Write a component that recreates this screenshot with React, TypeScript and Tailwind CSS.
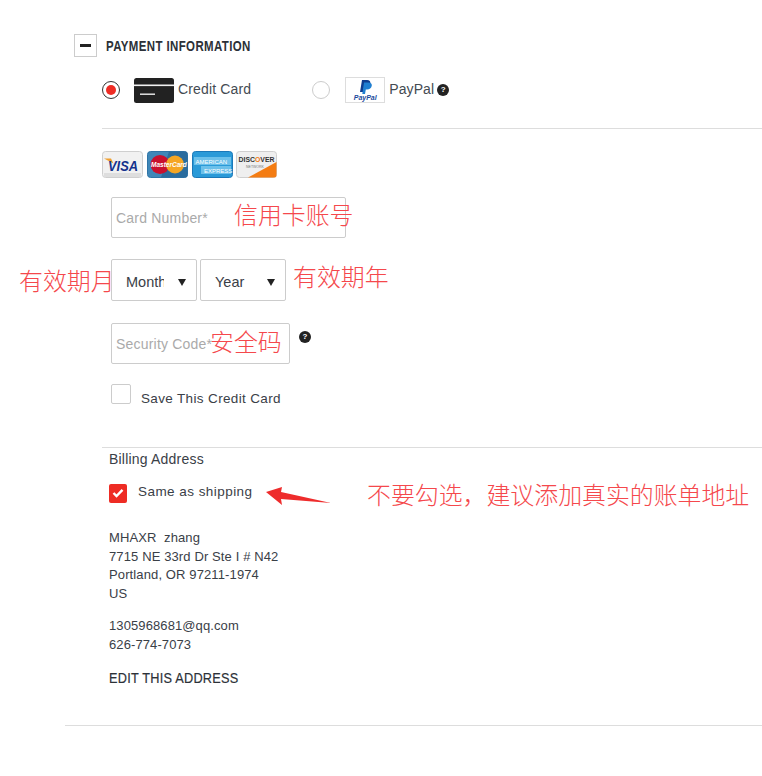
const note =
  "absolute font-['Noto_Sans_CJK_SC',sans-serif] font-light text-[23.900px] leading-[30px] text-[#f5484c] whitespace-nowrap";

function HelpDot({ className = "" }: { className?: string }) {
  return (
    <span
      className={`flex h-3 w-3 items-center justify-center rounded-full bg-[#222] text-[8px] font-bold leading-none text-white ${className}`}
    >
      ?
    </span>
  );
}

function CardIcon() {
  return (
    <svg width="40" height="25" viewBox="0 0 40 25">
      <rect x="0" y="0" width="40" height="25" rx="2.5" fill="#222" />
      <rect x="0" y="6.5" width="40" height="1.6" fill="#f2f2f2" />
      <rect x="6" y="15.500" width="15" height="1.4" fill="#eee" />
    </svg>
  );
}

function PayPalIcon() {
  return (
    <div className="flex h-[26px] w-10 flex-col items-center border border-[#ddd] bg-white">
      <svg width="13" height="14" viewBox="0 0 13 14" className="mt-[2px]">
        <path d="M3 0h5c2.600 0 3.800 1.500 3.300 3.800C10.800 6.200 9 7.500 6.700 7.500H5L4.200 12H1z" fill="#0f3d8f" />
        <path d="M5 2.500h4.500c2.400 0 3.700 1.300 3.200 3.500-.5 2.300-2.200 3.500-4.500 3.500H6.800L6 14H3.300z" fill="#1f7fd1" />
      </svg>
      <span className="text-[7px] font-bold italic leading-[8px] text-[#1b4a9c]">PayPal</span>
    </div>
  );
}

function Visa() {
  return (
    <svg width="41" height="27" viewBox="0 0 41 27">
      <rect x=".5" y=".5" width="40" height="26" rx="3" fill="#f1f1f1" stroke="#cfcfcf" />
      <path d="M2 26h37v-4H2z" fill="#dedede" />
      <path d="M2 7.500h7l2.500 5z" fill="#f0a030" />
      <text x="6" y="19.500" textLength="30" lengthAdjust="spacingAndGlyphs" fontSize="15" fontWeight="700" fontStyle="italic" fill="#14328c" fontFamily="Liberation Sans">
        VISA
      </text>
    </svg>
  );
}

function MasterCard() {
  return (
    <svg width="41" height="27" viewBox="0 0 41 27">
      <rect x=".5" y=".5" width="40" height="26" rx="3" fill="#3f87b8" stroke="#2f74a6" />
      <path d="M22 .5h16a2.500 2.500 0 0 1 2.500 2.500v21a2.500 2.500 0 0 1-2.500 2.500H14z" fill="#2a6c9e" />
      <circle cx="13" cy="13.500" r="9.500" fill="#c8102e" />
      <circle cx="28" cy="13.500" r="9" fill="#f5a623" />
      <text x="4" y="16" fontSize="6.500" fontWeight="700" fontStyle="italic" fill="#fff" fontFamily="Liberation Sans">
        MasterCard
      </text>
    </svg>
  );
}

function Amex() {
  return (
    <svg width="41" height="27" viewBox="0 0 41 27">
      <rect x=".5" y=".5" width="40" height="26" rx="3" fill="#2a9ad8" stroke="#1b78b8" />
      <rect x="2" y="6" width="37" height="8" fill="#6cc0ea" />
      <rect x="9" y="15" width="30" height="8" fill="#6cc0ea" />
      <text x="3.500" y="12.500" fontSize="6" fill="#fff" fontFamily="Liberation Sans">
        AMERICAN
      </text>
      <text x="12" y="21.500" fontSize="6" fill="#fff" fontFamily="Liberation Sans">
        EXPRESS
      </text>
    </svg>
  );
}

function Discover() {
  return (
    <svg width="41" height="27" viewBox="0 0 41 27">
      <rect x=".5" y=".5" width="40" height="26" rx="3" fill="#efefef" stroke="#cfcfcf" />
      <path d="M12 26.500 40.500 11v13a2.500 2.500 0 0 1-2.500 2.500z" fill="#f47c12" />
      <text x="2.500" y="11" textLength="36" lengthAdjust="spacingAndGlyphs" fontSize="7.500" fontWeight="700" fill="#333" fontFamily="Liberation Sans">
        DISC<tspan fill="#f47c12">O</tspan>VER
      </text>
      <text x="19" y="16.500" textAnchor="middle" fontSize="3.500" fill="#777" fontFamily="Liberation Sans">
        NETWORK
      </text>
    </svg>
  );
}

function FakeSelect({ label, clip }: { label: string; clip?: boolean }) {
  return (
    <div className="flex h-[42px] w-[86px] items-center rounded-[2px] border border-[#ccc] bg-white pl-[14px] pr-[10px] text-[14.500px] text-[#3a4047]">
      <span className={clip ? "w-[38px] translate-y-[3px] overflow-hidden whitespace-nowrap" : "translate-y-[3px]"}>{label}</span>
      <span className="ml-auto h-0 w-0 translate-y-[2px] border-x-[4px] border-t-[7px] border-x-transparent border-t-[#222]" />
    </div>
  );
}

export default function App() {
  return (
    <div className="relative h-[776px] w-[762px] overflow-hidden bg-white pl-[65px] pt-[34px] font-['Liberation_Sans',sans-serif] text-[#333]">
      <div className="flex h-[23px] items-center pl-[9px]">
        <div className="flex h-[23px] w-[23px] items-center justify-center border border-[#ccc]">
          <span className="h-[3px] w-[11px] bg-[#222]" />
        </div>
        <h2 className="ml-[9px] origin-left translate-y-px scale-x-[0.79] whitespace-nowrap text-[14.500px] font-bold tracking-[0.5px] text-[#2c3138]">
          PAYMENT INFORMATION
        </h2>
      </div>

      <div className="ml-[37px]">
        <div className="mt-5 flex h-[26px] items-center">
          <span className="flex h-[18px] w-[18px] items-center justify-center rounded-full border border-[#333]">
            <span className="h-[10px] w-[10px] rounded-full bg-[#ee2c24]" />
          </span>
          <span className="ml-[14px]">
            <CardIcon />
          </span>
          <span className="ml-1 -translate-y-px text-sm tracking-[0.15px] text-[#444b52]">Credit Card</span>
          <span className="ml-[61px] h-[18px] w-[18px] rounded-full border border-[#ccc]" />
          <span className="ml-[15px]">
            <PayPalIcon />
          </span>
          <span className="ml-1 -translate-y-px text-sm tracking-[0.1px] text-[#444b52]">PayPal</span>
          <HelpDot className="ml-[3px]" />
        </div>

        <div className="mt-[25px] border-t border-[#ddd]" />

        <div className="mt-[22px] flex gap-1">
          <Visa />
          <MasterCard />
          <Amex />
          <div className="-ml-px">
            <Discover />
          </div>
        </div>

        <div className="ml-[9px]">
          <div className="mt-[19px] flex h-[41px] w-[235px] items-center rounded-[2px] border border-[#ccc] pl-1 text-sm tracking-[0.2px] text-[#aaa]">
            Card Number*
          </div>
          <div className="mt-[21px] flex gap-[3px]">
            <FakeSelect label="Month" clip />
            <FakeSelect label="Year" />
          </div>
          <div className="mt-[22px] flex items-start">
            <div className="flex h-[41px] w-[179px] items-center rounded-[2px] border border-[#ccc] pl-1 text-sm tracking-[0.2px] text-[#aaa]">
              Security Code*
            </div>
            <HelpDot className="ml-[9px] mt-2" />
          </div>
          <div className="mt-5 flex items-start">
            <span className="h-5 w-5 rounded-[2px] border border-[#ccc]" />
            <span className="ml-[10px] mt-[7px] text-[13.500px] leading-4 tracking-[0.35px] text-[#3a4047]">
              Save This Credit Card
            </span>
          </div>
        </div>

        <div className="mt-[40px] border-t border-[#ddd]" />

        <div className="pl-[7px]">
          <p className="mt-[3px] text-[14px] leading-[17px] tracking-[0.2px] text-[#3a4047]">Billing Address</p>
          <div className="mt-[15px] flex items-center">
            <span className="flex h-[19px] w-[18px] items-center justify-center rounded-[2px] bg-[#ee2c24]">
              <svg width="12" height="10" viewBox="0 0 12 10">
                <path d="M1.500 5 4.500 8 10.500 1.800" fill="none" stroke="#fff" strokeWidth="2.400" />
              </svg>
            </span>
            <span className="ml-[11px] -translate-y-px text-[13.500px] tracking-[0.45px] text-[#3a4047]">Same as shipping</span>
          </div>
          <div className="mt-[26px] text-[13px] leading-[18.500px] tracking-[0.12px] text-[#3a4047]">
            <p>MHAXR&nbsp; zhang</p>
            <p>7715 NE 33rd Dr Ste I # N42</p>
            <p>Portland, OR 97211-1974</p>
            <p>US</p>
          </div>
          <div className="mt-[14px] text-[13px] leading-[18.500px] tracking-[0.1px] text-[#3a4047]">
            <p>1305968681@qq.com</p>
            <p>626-774-7073</p>
          </div>
          <p className="mt-[15px] origin-left scale-x-[0.82] whitespace-nowrap text-[15.500px] leading-[18px] tracking-[0.3px] text-[#2c3138] [-webkit-text-stroke:0.2px_#2c3138]">
            EDIT THIS ADDRESS
          </p>
        </div>
      </div>

      <div className="mt-[38px] border-t border-[#ddd]" />

      <span className={`${note} left-[234px] top-[199px]`}>信用卡账号</span>
      <span className={`${note} left-[19px] top-[265px]`}>有效期月</span>
      <span className={`${note} left-[293px] top-[261px]`}>有效期年</span>
      <span className={`${note} left-[210px] top-[326px]`}>安全码</span>
      <span className={`${note} left-[367px] top-[479px]`}>不要勾选，建议添加真实的账单地址</span>
      <svg className="absolute left-[264px] top-[486px]" width="70" height="20" viewBox="0 0 70 20">
        <path d="M2 6 18 1 17 6 67 17 17 13 18 19z" fill="#ee2c2c" />
      </svg>
    </div>
  );
}
